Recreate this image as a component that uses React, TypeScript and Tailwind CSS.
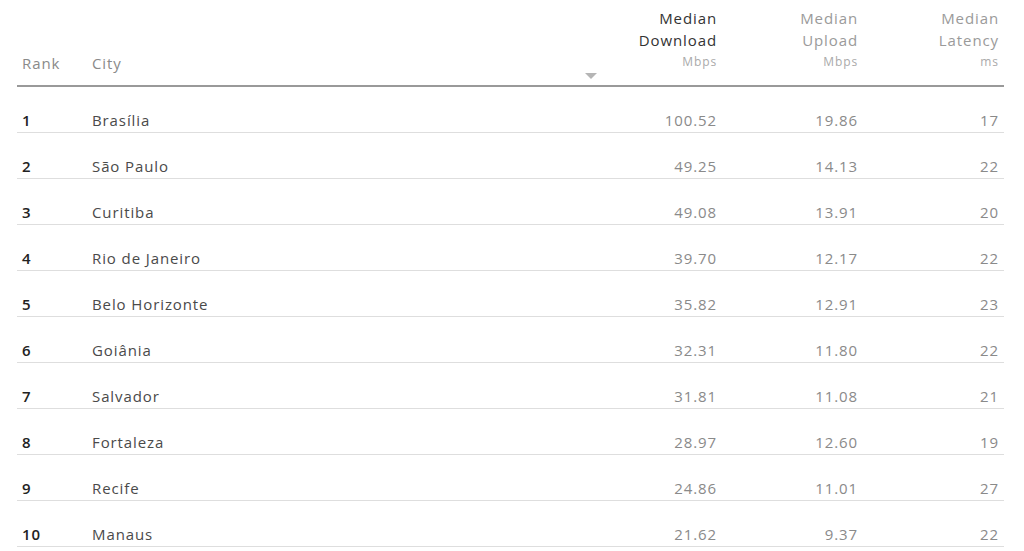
const rows = [
  { rank: 1, city: 'Brasília', down: '100.52', up: '19.86', lat: '17' },
  { rank: 2, city: 'São Paulo', down: '49.25', up: '14.13', lat: '22' },
  { rank: 3, city: 'Curitiba', down: '49.08', up: '13.91', lat: '20' },
  { rank: 4, city: 'Rio de Janeiro', down: '39.70', up: '12.17', lat: '22' },
  { rank: 5, city: 'Belo Horizonte', down: '35.82', up: '12.91', lat: '23' },
  { rank: 6, city: 'Goiânia', down: '32.31', up: '11.80', lat: '22' },
  { rank: 7, city: 'Salvador', down: '31.81', up: '11.08', lat: '21' },
  { rank: 8, city: 'Fortaleza', down: '28.97', up: '12.60', lat: '19' },
  { rank: 9, city: 'Recife', down: '24.86', up: '11.01', lat: '27' },
  { rank: 10, city: 'Manaus', down: '21.62', up: '9.37', lat: '22' },
];

function HeadCell({ title, sub, unit, active }: { title: string; sub: string; unit: string; active?: boolean }) {
  return (
    <div className="flex flex-col items-end pr-[5px] pt-[7px]">
      <span className={`text-[15px] leading-[22px] ${active ? 'text-[#333]' : 'text-[#9a9a9a]'}`}>{title}</span>
      <span className={`text-[15px] leading-[22px] ${active ? 'text-[#333]' : 'text-[#9a9a9a]'}`}>{sub}</span>
      <span className="text-[12px] leading-[22px] text-[#aaa]">{unit}</span>
    </div>
  );
}

export default function App() {
  return (
    <div className="w-[1024px] h-[551px] bg-white overflow-hidden font-['Open_Sans',sans-serif] tracking-[0.9px]">
      <div className="ml-[17px] w-[987px]">
        <div className="grid grid-cols-[70px_1fr_141px_141px_141px] h-[87px] border-b-2 border-[#999]">
          <div className="pl-[5px] pt-[52px] text-[15px] leading-[22px] text-[#8a8a8a]">Rank</div>
          <div className="pl-[5px] pt-[52px] text-[15px] leading-[22px] text-[#8a8a8a]">City</div>
          <div className="relative">
            <HeadCell title="Median" sub="Download" unit="Mbps" active />
            <svg className="absolute left-[4px] bottom-[6px]" width="12" height="6" viewBox="0 0 12 6">
              <path d="M0 0 L12 0 L6 6 Z" fill="#b5b5b5" />
            </svg>
          </div>
          <HeadCell title="Median" sub="Upload" unit="Mbps" />
          <HeadCell title="Median" sub="Latency" unit="ms" />
        </div>
        {rows.map((r) => (
          <div
            key={r.rank}
            className="grid grid-cols-[70px_1fr_141px_141px_141px] pt-[23px] pb-[2px] border-b border-[#dedede] text-[15px] leading-[20px]"
          >
            <div className="pl-[5px] font-semibold text-[#222]">{r.rank}</div>
            <div className="pl-[5px] text-[#4a4a4a]">{r.city}</div>
            <div className="pr-[5px] text-right text-[#8a8a8a]">{r.down}</div>
            <div className="pr-[5px] text-right text-[#8a8a8a]">{r.up}</div>
            <div className="pr-[5px] text-right text-[#8a8a8a]">{r.lat}</div>
          </div>
        ))}
      </div>
    </div>
  );
}
